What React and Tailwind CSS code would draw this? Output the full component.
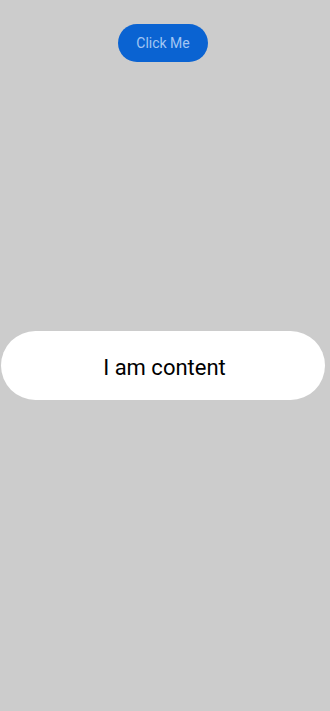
export default function App() {
  return (
    <div className="w-[330px] h-[711px] bg-[#cccccc] flex flex-col items-center" style={{ fontFamily: 'Roboto, "Noto Sans", sans-serif' }}>
      <button className="mt-[24px] ml-[-4px] w-[90px] h-[38px] rounded-full bg-[#0a63d2] text-[#a3c6f3] text-[14px] leading-none">
        Click Me
      </button>
      <div className="mt-[269px] ml-[-4px] w-[324px] h-[69px] rounded-full bg-white flex items-center justify-center">
        <span className="text-[22px] text-black pl-[3px] pt-[3px]">I am content</span>
      </div>
    </div>
  )
}
